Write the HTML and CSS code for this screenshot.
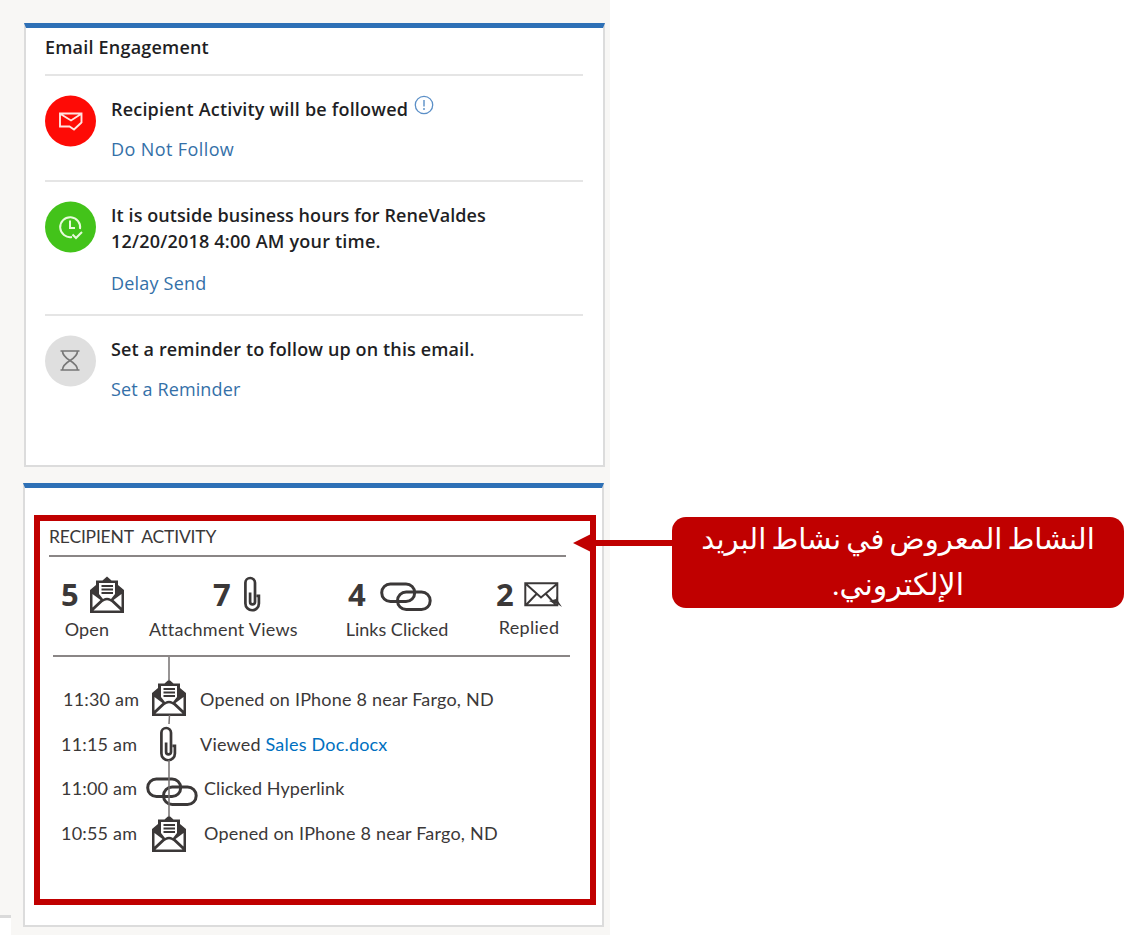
FILE: index.html
```html
<!DOCTYPE html>
<html lang="en">
<head>
<meta charset="utf-8">
<title>Email Engagement</title>
<link rel="stylesheet" href="styles.css">
</head>
<body>
<svg class="defs" width="0" height="0" aria-hidden="true">
  <symbol id="open" viewBox="0 0 34 37">
    <path d="M0 14 6 9V4.500h6.500L17 .5l4.500 4H28V9l6 5v23H0z" fill="#3b3838"/>
    <path d="M9 7h16v11l-4 5q-4-2.500-8 0l-4-5z" fill="#fff"/>
    <path d="M2.500 18v13.500L10.500 24zM31.500 18v13.500L23.500 24zM3.500 34.500 12.500 26q4.500-3.500 9 0l9 8.500z" fill="#fff"/>
    <path d="M11.500 10h11.500M11.500 13.500h11.500M11.500 17h11.500" stroke="#3b3838" stroke-width="1.800"/>
  </symbol>
  <symbol id="clip" viewBox="0 0 18 36">
    <path d="M13.600 19.800h2.300V27.500a6.700 6.700 0 0 1-13.500 0V6.800a4.800 4.800 0 0 1 9.600 0V26a2.400 2.400 0 0 1-4.900 0V16.500" fill="none" stroke="#3b3838" stroke-width="2.700"/>
  </symbol>
  <symbol id="links" viewBox="0 0 52 30">
    <g fill="none" stroke="#3b3838" stroke-width="3"><rect x="1.700" y="2" width="33" height="17.500" rx="8.700"/><rect x="17.500" y="10" width="32.700" height="17.500" rx="8.700"/></g>
  </symbol>
</svg>
<main class="stage">
  <section class="panel">
    <article class="card engagement">
      <h2 class="card-title"><span class="t-title">Email Engagement</span></h2>
      <div class="item follow">
        <svg class="disc" viewBox="0 0 52 52"><circle cx="25.500" cy="26" r="25.500" fill="#fe0b06"/><path d="M36.500 28V18.500H15v13h9.500l4.500 3 7.500-7M15.500 19l10.500 6.500L36 19" fill="none" stroke="#ffe4e0" stroke-width="1.900"/></svg>
        <div class="copy">
          <p class="lead"><span class="t-follow">Recipient Activity will be followed</span><svg class="info" viewBox="0 0 20 20"><circle cx="10" cy="10" r="8.700" fill="none" stroke="#5b8fc7" stroke-width="1.300"/><path d="M10 5v6.500M10 13v2" stroke="#5b8fc7" stroke-width="1.400"/></svg></p>
          <a class="action t-dnf">Do Not Follow</a>
        </div>
      </div>
      <div class="item hours">
        <svg class="disc" viewBox="0 0 52 52"><circle cx="25.500" cy="26" r="25.500" fill="#43c31a"/><path d="M35 28A10 10 0 1 0 27 36M25 19.500v7.500H30M27.500 33.500l3.500 3.500 6-6" fill="none" stroke="#e8fbdc" stroke-width="2"/></svg>
        <div class="copy">
          <p class="lead"><span class="t-hours1">It is outside business hours for ReneValdes</span><br><span class="t-hours2">12/20/2018 4:00 AM your time.</span></p>
          <a class="action t-delay">Delay Send</a>
        </div>
      </div>
      <div class="item remind">
        <svg class="disc" viewBox="0 0 52 52"><circle cx="25.500" cy="26" r="25.500" fill="#dfdfdf"/><path d="M15.500 16h19M15.500 35h19M17.500 16q0 5 7.500 9.500-7.500 4.700-7.500 9.500M32.500 16q0 5-7.500 9.500 7.500 4.700 7.500 9.500" fill="none" stroke="#777" stroke-width="1.700"/></svg>
        <div class="copy">
          <p class="lead"><span class="t-set">Set a reminder to follow up on this email.</span></p>
          <a class="action t-rem">Set a Reminder</a>
        </div>
      </div>
    </article>

    <article class="card recipient">
      <div class="frame">
        <h3 class="frame-title">RECIPIENT&nbsp; ACTIVITY</h3>
        <div class="stats">
          <div class="stat s-open"><div class="figure"><b>5</b><svg class="i-open"><use href="#open"/></svg></div><span>Open</span></div>
          <div class="stat s-att"><div class="figure"><b>7</b><svg class="i-clip"><use href="#clip"/></svg></div><span>Attachment Views</span></div>
          <div class="stat s-link"><div class="figure"><b>4</b><svg class="i-links"><use href="#links"/></svg></div><span>Links Clicked</span></div>
          <div class="stat s-rep"><div class="figure"><b>2</b><svg class="i-mail" viewBox="0 0 38 26"><path d="M1.300 1.300h32v22h-32zM2 2l15 13.500L33 2M2 23l10.500-11M22 12l10 11" fill="none" stroke="#3b3838" stroke-width="2"/><path d="m25 19 7-2 1-3 1 5 4 6-6-4h-3z" fill="#3b3838"/></svg></div><span>Replied</span></div>
        </div>
        <div class="timeline">
          <div class="event e1"><time>11:30 am</time><span class="mark"><svg class="i-open"><use href="#open"/></svg></span><span class="what">Opened on IPhone 8 near Fargo, ND</span></div>
          <div class="event e2"><time>11:15 am</time><span class="mark"><svg class="i-clip"><use href="#clip"/></svg></span><span class="what">Viewed <a>Sales Doc.docx</a></span></div>
          <div class="event e3"><time>11:00 am</time><span class="mark"><svg class="i-links"><use href="#links"/></svg></span><span class="what">Clicked Hyperlink</span></div>
          <div class="event e4"><time>10:55 am</time><span class="mark"><svg class="i-open"><use href="#open"/></svg></span><span class="what">Opened on IPhone 8 near Fargo, ND</span></div>
          <svg class="thread" viewBox="0 0 4 162"><path d="M2 0v24M2.500 58 2 67M2 103v57" fill="none" stroke="#767171" stroke-width="1.500"/></svg>
        </div>
      </div>
    </article>
    <div class="corner"></div>
  </section>
  <svg class="arrow" viewBox="0 0 101 18"><path d="M0 9 18 0v6h83v6H18v6z" fill="#c00000"/></svg>
  <aside class="callout" lang="ar" dir="rtl"><span class="ar1">النشاط المعروض في نشاط البريد</span><span class="ar2">الإلكتروني.</span></aside>
</main>
</body>
</html>
```
FILE: styles.css
```css
* { box-sizing: border-box; }
body { margin: 0; background: #fff; }
h2, h3, p { margin: 0; }
svg { display: block; flex: none; }
.defs { position: absolute; }
.stage { position: relative; width: 1124px; height: 935px; overflow: hidden; }
.panel {
  position: relative; width: 610px; height: 935px; padding: 23px 5px 0 24px;
  background: #f8f7f5; display: flex; flex-direction: column; gap: 16px;
}
.card {
  background: #fff; border: 2px solid #dcdcdc; border-top: 5px solid #2e70b6;
  width: 581px; height: 444px; flex: none;
}
.engagement { padding: 0 20px 0 19px; font: 600 18px/26px "Open Sans", "Noto Sans", sans-serif; color: #1f1f25; }
.card-title { font: inherit; height: 48px; padding-top: 6px; border-bottom: 2px solid #e5e5e5; white-space: nowrap; }
.t-title { letter-spacing: .2px; }
.t-follow { letter-spacing: .2px; }
.t-hours1 { letter-spacing: .08px; }
.t-hours2 { letter-spacing: .2px; }
.t-set { letter-spacing: .13px; }
.t-dnf { letter-spacing: .4px; }
.t-delay { letter-spacing: .2px; }
.t-rem { letter-spacing: .12px; }
.item { display: flex; gap: 14px; padding-top: 19px; border-bottom: 2px solid #e5e5e5; white-space: nowrap; }
.follow { height: 106px; }
.hours { height: 134px; }
.remind { border: 0; }
.disc { width: 52px; height: 52px; }
.copy { display: flex; flex-direction: column; gap: 14px; padding-top: 1px; }
.lead { display: flex; flex-wrap: wrap; width: 440px; }
.lead br { display: none; }
.info { width: 20px; height: 20px; margin: -1px 0 0 6px; }
.action { font-weight: 400; color: #3470a8; }
.hours .action { margin-top: 2px; }

.recipient { margin-left: -1px; padding: 27px 5px 0 9px; }
.frame {
  width: 562px; height: 390px; border: 6px solid #c00000; padding: 0 20px 0 9px;
  font: 400 18px/24px Lato, "Open Sans", sans-serif; color: #3b3838; white-space: nowrap;
}
.frame-title { width: 517px; height: 36px; padding-top: 4px; font: inherit; font-size: 17.5px; letter-spacing: -.2px; border-bottom: 2px solid #8a8686; }
.stats { display: flex; align-items: flex-start; width: 517px; height: 100px; margin-left: 4px; padding-top: 18px; border-bottom: 2px solid #8a8686; }
.stat { display: flex; flex-direction: column; align-items: center; }
.stat > span { margin-top: 4px; }
.figure { display: flex; align-items: center; height: 38px; width: 100%; }
.figure b { font: 700 31px/40px "Open Sans", sans-serif; width: 18px; }
.s-open { width: 64px; margin-left: 8px; }
.s-open > span { margin-right: 12px; letter-spacing: .2px; }
.s-att { width: 149px; margin-left: 24px; }
.s-att > span { letter-spacing: .27px; }
.s-att .figure { padding-left: 64px; }
.s-link { width: 102px; margin-left: 48px; }
.s-link .figure { padding-left: 2px; }
.s-link .i-links { margin-top: 5px; }
.s-rep { width: 66px; margin-left: 48px; }
.s-rep > span { margin-top: 2px; letter-spacing: .3px; }
.i-open { width: 34px; height: 37px; }
.i-clip { width: 18px; height: 36px; }
.i-links { width: 52px; height: 30px; }
.i-mail { width: 38px; height: 26px; }
.s-open .i-open { margin-left: 11px; }
.s-att .i-clip { margin-left: 12px; }
.s-link .i-links { margin-left: 14px; }
.s-rep .i-mail { margin: 2px 0 0 10px; }

.timeline { position: relative; padding-top: 20px; }
.event { display: flex; align-items: center; height: 44.6px; }
.event time { width: 85px; flex: none; padding-left: 12px; letter-spacing: .2px; }
.event.e1 time { padding-left: 14px; }
.mark { width: 66px; display: flex; justify-content: center; flex: none; padding-left: 4px; }
.e1 .mark { padding-bottom: 4px; }
.e2 .mark { padding-left: 2px; }
.e3 .mark { padding: 7px 0 0 10px; }
.e4 .mark { padding: 1px 0 0 3px; }
.what { letter-spacing: .2px; }
.e3 .what { letter-spacing: .1px; }
.e3 .what, .e4 .what { padding-left: 4px; }
.event a { color: #0070c0; }
.thread { position: absolute; left: 118px; top: 0; width: 4px; height: 162px; }
.corner { position: absolute; left: 0; top: 915px; width: 11px; height: 20px; background: #fff; border-top: 3px solid #dadada; }
.arrow { position: absolute; left: 573px; top: 534px; width: 101px; height: 18px; }
.callout {
  position: absolute; left: 672px; top: 517px; width: 452px; height: 91px; border-radius: 14px;
  background: #c00000; color: #fff; display: flex; flex-direction: column; align-items: center;
  font: 400 30px/45px "Liberation Serif", "DejaVu Sans", serif; white-space: nowrap;
}
.ar1 { font-size: 29px; word-spacing: -2px; }
```
